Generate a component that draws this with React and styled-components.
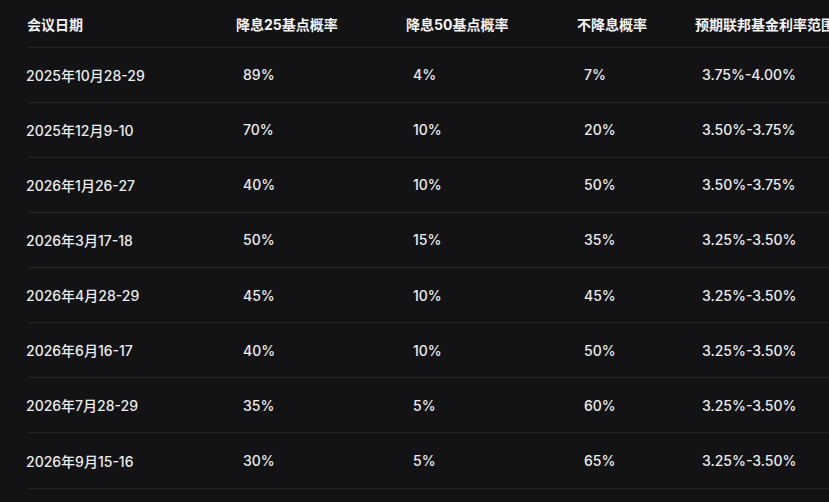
import styled, { createGlobalStyle } from "styled-components";

const GlobalStyle = createGlobalStyle`
  html, body {
    margin: 0;
    padding: 0;
    background: #131315;
  }
  body {
    font-family: "Inter", "Noto Sans CJK SC", sans-serif;
    overflow: hidden;
  }
`;

const Page = styled.div`
  width: 829px;
  height: 502px;
  background: #131315;
  padding-left: 27px;
  box-sizing: border-box;
  overflow: hidden;
`;

const Table = styled.div`
  width: 900px;
`;

const Row = styled.div`
  display: grid;
  grid-template-columns: 209px 170px 171px 118px 232px;
  align-items: center;
  height: ${({ $header }) => ($header ? "47.5px" : "55.15px")};
  padding-top: ${({ $header }) => ($header ? "2px" : "0")};
  box-sizing: border-box;
  border-bottom: 1px solid #242428;
  margin-left: 1px;
`;

const HeadCell = styled.div`
  color: #f4f4f5;
  font-size: 14px;
  font-weight: 700;
  white-space: nowrap;
  margin-left: -1px;
`;

const DateCell = styled.div`
  color: #ececee;
  font-size: 14px;
  font-weight: 500;
  white-space: nowrap;
  margin-left: -2px;
`;

const Value = styled.div`
  color: #ececee;
  font-size: 14px;
  font-weight: 500;
  white-space: nowrap;
  padding-left: 6px;
`;

const headers = [
  "会议日期",
  "降息25基点概率",
  "降息50基点概率",
  "不降息概率",
  "预期联邦基金利率范围",
];

const rows = [
  ["2025年10月28-29", "89%", "4%", "7%", "3.75%-4.00%"],
  ["2025年12月9-10", "70%", "10%", "20%", "3.50%-3.75%"],
  ["2026年1月26-27", "40%", "10%", "50%", "3.50%-3.75%"],
  ["2026年3月17-18", "50%", "15%", "35%", "3.25%-3.50%"],
  ["2026年4月28-29", "45%", "10%", "45%", "3.25%-3.50%"],
  ["2026年6月16-17", "40%", "10%", "50%", "3.25%-3.50%"],
  ["2026年7月28-29", "35%", "5%", "60%", "3.25%-3.50%"],
  ["2026年9月15-16", "30%", "5%", "65%", "3.25%-3.50%"],
];

export default function App() {
  return (
    <Page>
      <GlobalStyle />
      <Table>
        <Row $header>
          {headers.map((h) => (
            <HeadCell key={h}>{h}</HeadCell>
          ))}
        </Row>
        {rows.map(([date, ...vals]) => (
          <Row key={date}>
            <DateCell>{date}</DateCell>
            {vals.map((v, i) => (
              <Value key={i}>{v}</Value>
            ))}
          </Row>
        ))}
      </Table>
    </Page>
  );
}
